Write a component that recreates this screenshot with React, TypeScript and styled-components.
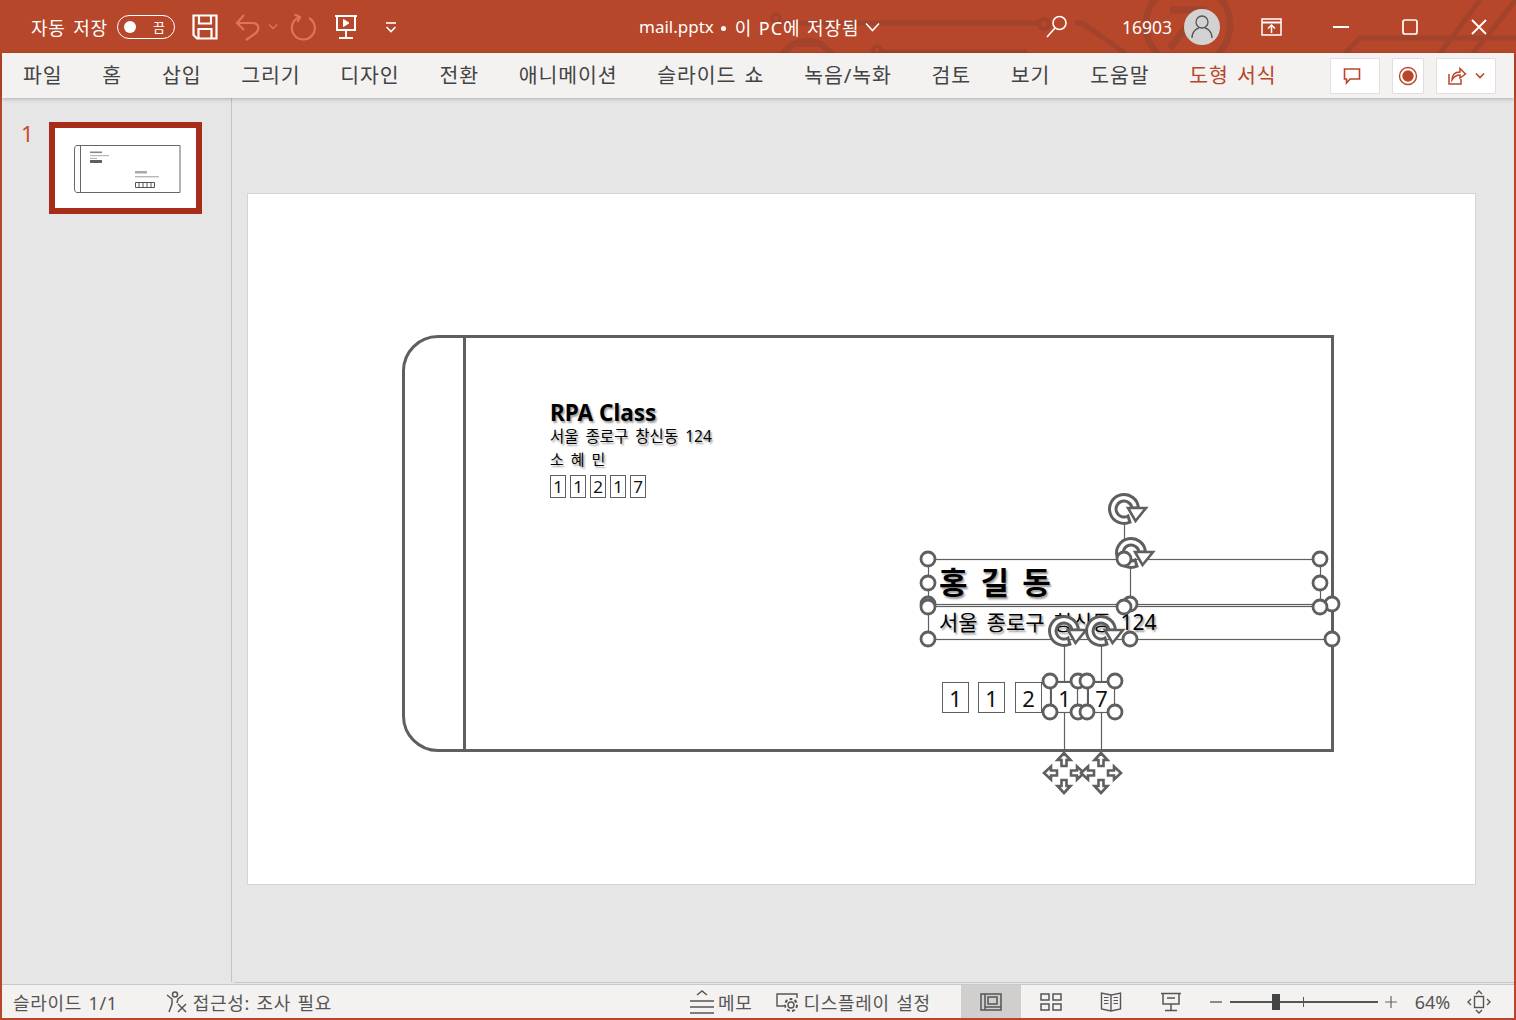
import React from "react";
import styled, { createGlobalStyle } from "styled-components";

const GlobalStyle = createGlobalStyle`
  html, body {
    margin: 0;
    padding: 0;
    background: #e6e6e6;
    overflow: hidden;
  }
  * {
    box-sizing: border-box;
  }
`;

const FONT = `"Noto Sans", "Noto Sans CJK KR", sans-serif`;
const ACCENT = "#b7472a";
const GRAY = "#5f5f5f";

const Window = styled.div`
  width: 1516px;
  height: 1020px;
  display: flex;
  flex-direction: column;
  background: #e6e6e6;
  border: solid ${ACCENT};
  border-width: 0 2px 2px 2px;
  font-family: ${FONT};
  color: #444;
`;

const TitleBar = styled.div`
  position: relative;
  isolation: isolate;
  height: 53px;
  flex: none;
  margin: 0 -2px;
  background: ${ACCENT};
  color: #fff;
  display: flex;
  align-items: center;
  overflow: hidden;
`;

const Circuit = styled.svg`
  position: absolute;
  left: 0;
  top: 0;
  z-index: -1;
`;

const TitleSection = styled.div<{ $width: number }>`
  position: relative;
  flex: none;
  width: ${(p) => p.$width}px;
  height: 100%;
  display: flex;
  align-items: center;
`;

const AutoSave = styled.span`
  font-size: 18px;
  margin-left: 31px;
  letter-spacing: 0.8px;
  word-spacing: 2px;
  white-space: nowrap;
`;

const Toggle = styled.div`
  width: 58px;
  height: 24px;
  margin-left: 9px;
  border: 1.5px solid #fff;
  border-radius: 12px;
  display: flex;
  align-items: center;
  justify-content: space-between;
  padding: 0 9px 0 6px;
  font-size: 13px;
`;

const ToggleDot = styled.span`
  width: 12px;
  height: 12px;
  border-radius: 50%;
  background: #fff;
`;

const QuickIcon = styled.svg<{ $left: number }>`
  flex: none;
  margin-left: ${(p) => p.$left}px;
`;

const SearchIcon = styled.svg`
  position: absolute;
  left: 1045px;
  top: 15px;
`;

const FileName = styled.span`
  font-size: 17px;
  position: absolute;
  left: 639px;
  white-space: nowrap;
  display: flex;
  align-items: center;
`;

const SavedState = styled.span`
  font-size: 18px;
  letter-spacing: 0.9px;
  word-spacing: 1px;
`;

const Dot = styled.span`
  width: 5px;
  height: 5px;
  margin: 3px 9px 0 7px;
  border-radius: 50%;
  background: #fff;
`;

const UserCode = styled.span`
  font-size: 17.5px;
`;

const Avatar = styled.div`
  width: 36px;
  height: 36px;
  margin-left: 12px;
  border-radius: 50%;
  background: #d2d2d2;
  display: flex;
  align-items: center;
  justify-content: center;
`;

const Ribbon = styled.div`
  position: relative;
  height: 45px;
  flex: none;
  background: #f3f2f1;
  box-shadow: 0 1px 4px rgba(0, 0, 0, 0.25);
  display: flex;
  align-items: center;
  padding-left: 21px;
  z-index: 1;
`;

const Tabs = styled.div`
  display: flex;
  gap: 39.8px;
  flex: 1;
`;

const Tab = styled.span<{ $accent?: boolean }>`
  font-size: 20.5px;
  line-height: 45px;
  letter-spacing: 0.9px;
  word-spacing: 2px;
  white-space: nowrap;
  color: ${(p) => (p.$accent ? ACCENT : "#444")};
`;

const RibbonButton = styled.div<{ $width: number; $right: number }>`
  width: ${(p) => p.$width}px;
  height: 36px;
  margin-right: ${(p) => p.$right}px;
  background: #fff;
  border: 1px solid #e1dfdd;
  border-radius: 2px;
  display: flex;
  align-items: center;
  justify-content: center;
  gap: 8px;
`;

const Main = styled.div`
  flex: 1;
  min-height: 0;
  display: flex;
  border-bottom: 1px solid #c8c8c8;
`;

const ThumbPanel = styled.div`
  width: 230px;
  height: 884px;
  flex: none;
  border-right: 1px solid #c4c4c4;
  display: flex;
  align-items: flex-start;
  padding: 22px 0 0 19px;
`;

const ThumbNumber = styled.span`
  font-size: 22px;
  line-height: 26px;
  color: #cc4a2c;
  width: 28px;
`;

const Thumb = styled.div`
  width: 153px;
  height: 92px;
  margin-top: 2px;
  background: #fff;
  border: 6px solid #a92b1a;
  display: flex;
  align-items: center;
  justify-content: center;
`;

const Workspace = styled.div`
  flex: 1;
  height: 885px;
  margin-left: 2px;
  padding: 95px 0 0 13px;
  border-bottom: 1px solid #c8c8c8;
`;

const Slide = styled.div`
  position: relative;
  width: 1229px;
  height: 692px;
  background: #fff;
  border: 1px solid #d4d4d4;
`;

const Envelope = styled.div`
  position: absolute;
  left: 154px;
  top: 141px;
  width: 932px;
  height: 417px;
  border: 3px solid ${GRAY};
  border-radius: 36px 0 0 36px;
`;

const Flap = styled.div`
  position: absolute;
  left: 58px;
  top: 0;
  bottom: 0;
  width: 3px;
  background: ${GRAY};
`;

const SlideText = styled.span<{ $x: number; $y: number; $size: number; $bold?: boolean; $word?: number }>`
  position: absolute;
  left: ${(p) => p.$x}px;
  top: ${(p) => p.$y}px;
  font-size: ${(p) => p.$size}px;
  line-height: 1;
  font-weight: ${(p) => (p.$bold ? 700 : 400)};
  word-spacing: ${(p) => p.$word ?? 0}px;
  color: #000;
  white-space: pre;
  text-shadow: 1.5px 1.5px 2px rgba(0, 0, 0, 0.4);
`;

const DigitBox = styled.span<{ $x: number; $y: number; $w: number; $h: number; $size: number }>`
  position: absolute;
  left: ${(p) => p.$x}px;
  top: ${(p) => p.$y}px;
  width: ${(p) => p.$w}px;
  height: ${(p) => p.$h}px;
  border: 1px solid ${GRAY};
  font-size: ${(p) => p.$size}px;
  color: #111;
  display: flex;
  align-items: center;
  justify-content: center;
`;

const Overlay = styled.svg`
  position: absolute;
  left: -1px;
  top: -1px;
  overflow: visible;
  pointer-events: none;
`;

const StatusBar = styled.div`
  height: 33px;
  flex: none;
  background: #f3f2f1;
  display: flex;
  align-items: center;
  font-size: 18px;
  color: #555;
`;

const StatusText = styled.span<{ $left: number }>`
  margin-left: ${(p) => p.$left}px;
  letter-spacing: 0.7px;
  word-spacing: 1px;
  white-space: nowrap;
`;

const ZoomLabel = styled.span`
  margin-left: 18px;
  white-space: nowrap;
`;

const StatusIcon = styled.svg<{ $left: number }>`
  flex: none;
  margin-left: ${(p) => p.$left}px;
`;

const ViewButton = styled.div<{ $active?: boolean; $left: number }>`
  width: 60px;
  height: 33px;
  margin-left: ${(p) => p.$left}px;
  background: ${(p) => (p.$active ? "#d0cfce" : "transparent")};
  display: flex;
  align-items: center;
  justify-content: center;
`;

const ZoomTrack = styled.div`
  position: relative;
  width: 148px;
  height: 2px;
  margin-left: 8px;
  background: #555;
`;

const ZoomThumb = styled.span`
  position: absolute;
  left: 42px;
  top: -7px;
  width: 8px;
  height: 16px;
  background: #444;
`;

const ZoomTick = styled.span`
  position: absolute;
  left: 73px;
  top: -4px;
  width: 1px;
  height: 10px;
  background: #555;
`;

// 회전 핸들
const Rotator = ({ x, y }: { x: number; y: number }) => (
  <g transform={`translate(${x} ${y})`} stroke={GRAY} strokeWidth="3" strokeLinejoin="miter">
    <path d="M14.5 -1A14.5 14.5 0 1 0 6 13.2L4 7A8 8 0 1 1 8 -1Z" fill="#fff" />
    <path d="M4 -1L22 -1L11.5 12Z" fill="#fff" strokeWidth="2.6" />
  </g>
);

// 이동 핸들
const Mover = ({ x, y }: { x: number; y: number }) => {
  const arrow = "M0 -20L6.5 -13L2.5 -13L2.5 -7L-2.5 -7L-2.5 -13L-6.5 -13Z";
  return (
    <g transform={`translate(${x} ${y})`} fill="#fff" stroke={GRAY} strokeWidth="2.6">
      {[0, 90, 180, 270].map((r) => (
        <path key={r} d={arrow} transform={`rotate(${r})`} />
      ))}
    </g>
  );
};

const Handle = ({ x, y }: { x: number; y: number }) => (
  <circle cx={x} cy={y} r="7" fill="#fff" stroke={GRAY} strokeWidth="2.8" />
);

// 화면 좌표 -> 슬라이드 좌표
const SX = 248;
const SY = 194;

const returnBoxes = [550, 570, 590, 610, 630];
const digits = ["1", "1", "2", "1", "7"];
const mailBoxes = [942, 978, 1015, 1051, 1088];

const handlePoints: [number, number][] = [
  [928, 604],
  [1130, 604],
  [1332, 604],
  [928, 639],
  [1130, 639],
  [1332, 639],
  [928, 559],
  [1124, 559],
  [1320, 559],
  [928, 583],
  [1320, 583],
  [928, 607],
  [1124, 607],
  [1320, 607],
  [1050, 681],
  [1078, 681],
  [1050, 712],
  [1078, 712],
  [1087, 681],
  [1115, 681],
  [1087, 712],
  [1115, 712],
];

const tabs = ["파일", "홈", "삽입", "그리기", "디자인", "전환", "애니메이션", "슬라이드 쇼", "녹음/녹화", "검토", "보기", "도움말"];

const App = () => {
  return (
    <>
      <GlobalStyle />
      <Window>
        <TitleBar>
          <Circuit width="1516" height="53" fill="none" stroke="#a2432b" strokeWidth="5">
            <path d="M778 23H1039" />
            <circle cx="1044" cy="24" r="5" strokeWidth="4" />
            <path d="M1075 23H1082L1125 53" />
            <circle cx="776" cy="18" r="4" strokeWidth="3" />
            <circle cx="807" cy="70" r="29" strokeWidth="6" />
            <path d="M795 44H822" />
            <circle cx="877" cy="50" r="4" strokeWidth="3.5" />
            <path d="M880 52H1027" />
            <circle cx="1188" cy="25" r="42" strokeWidth="6.5" />
            <path d="M1170 10H1200L1170 48" strokeWidth="7" />
            <path d="M1345 53L1360 38H1516" />
            <path d="M1480 0L1440 53" />
            <path d="M1516 0L1473 53" />
          </Circuit>
          <TitleSection $width={1122}>
            <AutoSave>자동 저장</AutoSave>
            <Toggle>
              <ToggleDot />끔
            </Toggle>
            <QuickIcon $left={17} width="26" height="26" viewBox="0 0 26 26" fill="none" stroke="#fff" strokeWidth="2.2">
              <path d="M1.5 1.5H24.5V24.5H5L1.5 21Z" />
              <path d="M7 1.5V9.5H19V1.5" />
              <path d="M6.5 24V15H19.5V24" />
            </QuickIcon>
            <QuickIcon $left={17} width="28" height="28" viewBox="0 0 28 28" fill="none" stroke="#e0735a" strokeWidth="2.2">
              <path d="M2 10H17C24 10 25 16 21 20L11 27" />
              <path d="M9 2L2 10L9 17" />
            </QuickIcon>
            <QuickIcon $left={5} width="10" height="8" viewBox="0 0 10 8" fill="none" stroke="#e0735a" strokeWidth="1.5">
              <path d="M1 1.5L5 5.5L9 1.5" />
            </QuickIcon>
            <QuickIcon $left={12} width="28" height="28" viewBox="0 0 28 28" fill="none" stroke="#e0735a" strokeWidth="2.2">
              <path d="M10 4A11.5 11.5 0 1 0 19 5" />
              <path d="M4.5 1.5L10 4L7.5 9" />
            </QuickIcon>
            <QuickIcon $left={16} width="24" height="26" viewBox="0 0 24 26" fill="none" stroke="#fff" strokeWidth="2">
              <path d="M1 2H23" />
              <path d="M3 2V16H21V2" />
              <path d="M12 16V24M5 24H19" />
              <path d="M9.5 5.5L15 9L9.5 12.5Z" fill="#fff" strokeWidth="1" />
            </QuickIcon>
            <QuickIcon $left={27} width="12" height="12" viewBox="0 0 12 12" fill="none" stroke="#fff" strokeWidth="1.6">
              <path d="M1 2H11" />
              <path d="M1.5 6L6 10.5L10.5 6" />
            </QuickIcon>
            <FileName>
              mail.pptx
              <Dot />
              <SavedState>이 PC에 저장됨</SavedState>
              <QuickIcon $left={6} width="15" height="10" viewBox="0 0 15 10" fill="none" stroke="#fff" strokeWidth="1.6">
                <path d="M1 1.5L7.5 8.5L14 1.5" />
              </QuickIcon>
            </FileName>
            <SearchIcon width="24" height="24" viewBox="0 0 24 24" fill="none" stroke="#fff" strokeWidth="1.6">
              <circle cx="14.5" cy="8" r="6.5" />
              <path d="M10 13L2 22" />
            </SearchIcon>
          </TitleSection>
          <UserCode>16903</UserCode>
          <Avatar>
            <svg width="24" height="26" viewBox="0 0 24 26" fill="none" stroke="#555" strokeWidth="1.3">
              <circle cx="12" cy="8" r="6" />
              <path d="M2 24C2 17 7 14.5 9 14M22 24C22 17 17 14.5 15 14" />
            </svg>
          </Avatar>
          <QuickIcon $left={41} width="21" height="18" viewBox="0 0 21 18" fill="none" stroke="#fff" strokeWidth="1.5">
            <path d="M1 1H20V17H1Z" />
            <path d="M1 4.5H20" strokeWidth="2" />
            <path d="M10.5 15V8M7 10.5L10.5 7L14 10.5" />
          </QuickIcon>
          <QuickIcon $left={51} width="16" height="4" viewBox="0 0 16 4" stroke="#fff" strokeWidth="2">
            <path d="M0 2H16" />
          </QuickIcon>
          <QuickIcon $left={53} width="16" height="16" viewBox="0 0 16 16" fill="none" stroke="#fff" strokeWidth="1.7">
            <rect x="1" y="1" width="14" height="14" rx="2" />
          </QuickIcon>
          <QuickIcon $left={53} width="16" height="16" viewBox="0 0 16 16" stroke="#fff" strokeWidth="1.9">
            <path d="M1 1L15 15M15 1L1 15" />
          </QuickIcon>
        </TitleBar>

        <Ribbon>
          <Tabs>
            {tabs.map((t) => (
              <Tab key={t}>{t}</Tab>
            ))}
            <Tab $accent>도형 서식</Tab>
          </Tabs>
          <RibbonButton $width={50} $right={12}>
            <svg width="18" height="18" viewBox="0 0 18 18" fill="none" stroke={ACCENT} strokeWidth="1.6" transform="translate(-3 0)">
              <path d="M1.5 2H16.5V12H7L3.5 16V12H1.5Z" />
            </svg>
          </RibbonButton>
          <RibbonButton $width={32} $right={12}>
            <svg width="20" height="20" viewBox="0 0 20 20" fill="none" stroke={ACCENT} strokeWidth="1.4">
              <circle cx="10" cy="10" r="8.5" />
              <circle cx="10" cy="10" r="5" fill={ACCENT} />
            </svg>
          </RibbonButton>
          <RibbonButton $width={60} $right={18}>
            <svg width="20" height="20" viewBox="0 0 20 20" fill="none" stroke={ACCENT} strokeWidth="1.5">
              <path d="M2 8V18H14V13" />
              <path d="M5 14C5 9 8 6 13 6V2.5L18.5 8L13 12V9C10 9 7 10.5 5 14Z" />
            </svg>
            <svg width="10" height="8" viewBox="0 0 10 8" fill="none" stroke={ACCENT} strokeWidth="1.6">
              <path d="M1 1.5L5 5.5L9 1.5" />
            </svg>
          </RibbonButton>
        </Ribbon>

        <Main>
          <ThumbPanel>
            <ThumbNumber>1</ThumbNumber>
            <Thumb>
              <svg width="141" height="80" viewBox="0 0 141 80">
                <path d="M22 17.5H125V64.5H22Q19.5 64.5 19.5 60V22Q19.5 17.5 22 17.5ZM25.5 17.5V64.5" fill="none" stroke="#666" strokeWidth="1" />
                <rect x="35" y="23.5" width="12" height="1.6" fill="#888" />
                <rect x="35" y="27" width="19" height="1.2" fill="#b8b8b8" />
                <rect x="35" y="29.8" width="7" height="1.2" fill="#b8b8b8" />
                <rect x="35" y="32" width="12" height="3" fill="#5f5f5f" />
                <rect x="80" y="43" width="12" height="2.5" fill="#aaa" />
                <rect x="80" y="48" width="24" height="1.4" fill="#b8b8b8" />
                <path d="M80.5 54.5H99.5V59.5H80.5Z" fill="#fff" stroke="#555" />
                <path d="M84 54.5V59.5M88 54.5V59.5M92 54.5V59.5M96 54.5V59.5" stroke="#555" strokeWidth="1" />
              </svg>
            </Thumb>
          </ThumbPanel>
          <Workspace>
            <Slide>
              <Envelope>
                <Flap />
              </Envelope>

              <SlideText $x={550 - SX} $y={402 - SY} $size={22.5} $bold>
                RPA Class
              </SlideText>
              <SlideText $x={550 - SX} $y={429 - SY} $size={15.5} $word={3}>
                서울 종로구 창신동 124
              </SlideText>
              <SlideText $x={550 - SX} $y={452 - SY} $size={15} $word={3}>
                소 혜 민
              </SlideText>
              {returnBoxes.map((x, i) => (
                <DigitBox key={x} $x={x - SX} $y={475 - SY} $w={16} $h={23} $size={17}>
                  {digits[i]}
                </DigitBox>
              ))}

              <SlideText $x={939 - SX} $y={567 - SY} $size={31} $bold $word={5}>
                홍 길 동
              </SlideText>
              <SlideText $x={939 - SX} $y={612 - SY} $size={21} $word={3.5}>
                서울 종로구 창신동 124
              </SlideText>
              {mailBoxes.map((x, i) => (
                <DigitBox key={x} $x={x - SX} $y={682 - SY} $w={27} $h={31} $size={22}>
                  {digits[i]}
                </DigitBox>
              ))}

              <Overlay width="1229" height="692" viewBox="247 193 1229 692">
                <g fill="none" stroke={GRAY} strokeWidth="1.2">
                  <rect x="928.5" y="559.5" width="392" height="47" />
                  <rect x="928.5" y="604.5" width="404" height="35" />
                  <path d="M1124.5 520V559M1130.5 565V604M1064.5 645V681M1064.5 712V752M1101.5 645V681M1101.5 712V752" />
                  <rect x="1050.5" y="681.5" width="27" height="31" />
                  <rect x="1087.5" y="681.5" width="27" height="31" />
                </g>
                <Rotator x={1124} y={509} />
                <Rotator x={1131} y={553} />
                <Rotator x={1064} y={631} />
                <Rotator x={1101} y={631} />
                {handlePoints.map(([x, y]) => (
                  <Handle key={`${x}-${y}`} x={x} y={y} />
                ))}
                <Mover x={1064} y={773} />
                <Mover x={1101} y={773} />
              </Overlay>
            </Slide>
          </Workspace>
        </Main>

        <StatusBar>
          <StatusText $left={11}>슬라이드 1/1</StatusText>
          <StatusIcon $left={47} width="24" height="24" viewBox="0 0 24 24" fill="none" stroke="#555" strokeWidth="1.5">
            <circle cx="10" cy="4.5" r="2.5" />
            <path d="M2 5L7 9V14L4 22M18 5L13 9L12 13" />
            <path d="M13 14L21 22M21 14L13 22" />
          </StatusIcon>
          <StatusText $left={4}>접근성: 조사 필요</StatusText>
          <StatusIcon $left={358} width="24" height="26" viewBox="0 0 24 26" fill="none" stroke="#555" strokeWidth="1.5">
            <path d="M7 6L12 2L17 6" />
            <path d="M0 12H24M0 18H24M0 24H24" />
          </StatusIcon>
          <StatusText $left={4}>메모</StatusText>
          <StatusIcon $left={24} width="24" height="20" viewBox="0 0 24 20" fill="none" stroke="#555" strokeWidth="1.4">
            <path d="M8 14H1V2H21V6" />
            <circle cx="15" cy="13" r="3" />
            <circle cx="15" cy="13" r="6" strokeDasharray="3 2.2" strokeWidth="2" />
          </StatusIcon>
          <StatusText $left={3}>디스플레이 설정</StatusText>
          <ViewButton $active $left={30}>
            <svg width="22" height="18" viewBox="0 0 22 18" fill="none" stroke="#555" strokeWidth="1.5">
              <rect x="1" y="1" width="20" height="16" />
              <rect x="8" y="4" width="9" height="7" />
              <path d="M5 1V17M5 14H21" />
            </svg>
          </ViewButton>
          <ViewButton $left={0}>
            <svg width="22" height="18" viewBox="0 0 22 18" fill="none" stroke="#555" strokeWidth="1.5">
              <rect x="1" y="1" width="8" height="6" />
              <rect x="13" y="1" width="8" height="6" />
              <rect x="1" y="11" width="8" height="6" />
              <rect x="13" y="11" width="8" height="6" />
            </svg>
          </ViewButton>
          <ViewButton $left={0}>
            <svg width="22" height="20" viewBox="0 0 22 20" fill="none" stroke="#555" strokeWidth="1.4">
              <path d="M11 3L1.5 1V17L11 19L20.5 17V1L11 3V19" />
              <path d="M4 5.5H8.5M4 8.5H8.5M4 11.5H8.5M13.5 5.5H18M13.5 8.5H18M13.5 11.5H18" strokeWidth="1" />
            </svg>
          </ViewButton>
          <ViewButton $left={0}>
            <svg width="20" height="20" viewBox="0 0 20 20" fill="none" stroke="#555" strokeWidth="1.5">
              <path d="M0 1.5H20" />
              <path d="M2 1.5V12H18V1.5" />
              <path d="M6 6H14" />
              <path d="M10 12V18.5M4 18.5H16" />
            </svg>
          </ViewButton>
          <StatusIcon $left={9} width="12" height="2" viewBox="0 0 12 2" stroke="#666" strokeWidth="1.5">
            <path d="M0 1H12" />
          </StatusIcon>
          <ZoomTrack>
            <ZoomThumb />
            <ZoomTick />
          </ZoomTrack>
          <StatusIcon $left={7} width="12" height="12" viewBox="0 0 12 12" stroke="#666" strokeWidth="1.2">
            <path d="M0 6H12M6 0V12" />
          </StatusIcon>
          <ZoomLabel>64%</ZoomLabel>
          <StatusIcon $left={17} width="24" height="24" viewBox="0 0 24 24" fill="none" stroke="#555" strokeWidth="1.4">
            <rect x="7.5" y="6.5" width="9" height="11" />
            <path d="M9 4L12 1L15 4M9 20L12 23L15 20M4 9L1 12L4 15M20 9L23 12L20 15" />
          </StatusIcon>
        </StatusBar>
      </Window>
    </>
  );
};

export default App;
